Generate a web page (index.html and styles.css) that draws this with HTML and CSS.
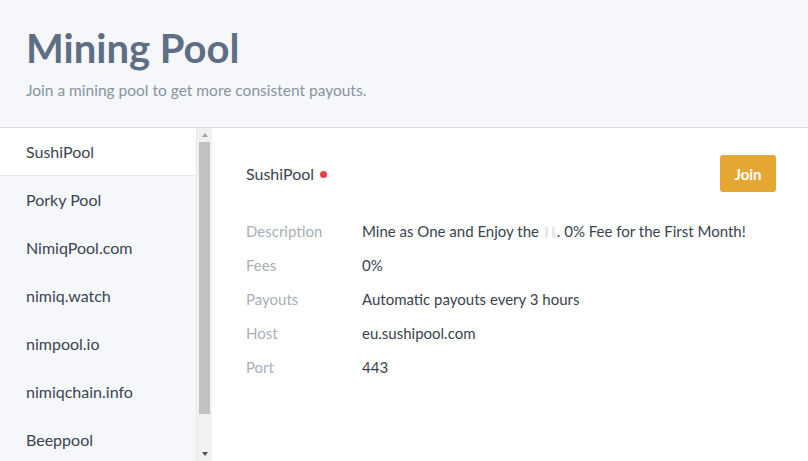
FILE: index.html
```
<!DOCTYPE html>
<html>
<head>
<meta charset="utf-8">
<link rel="stylesheet" href="styles.css">
</head>
<body>
<div class="header">
  <h1 class="title">Mining Pool</h1>
  <p class="subtitle">Join a mining pool to get more consistent payouts.</p>
</div>
<div class="layout">
  <div class="sidebar">
    <ul class="list">
      <li class="item selected">SushiPool</li>
      <li class="item">Porky Pool</li>
      <li class="item">NimiqPool.com</li>
      <li class="item">nimiq.watch</li>
      <li class="item">nimpool.io</li>
      <li class="item">nimiqchain.info</li>
      <li class="item">Beeppool</li>
    </ul>
    <div class="scrollbar">
      <div class="arrow up"></div>
      <div class="track"><div class="thumb"></div></div>
      <div class="arrow down"></div>
    </div>
  </div>
  <div class="main">
    <div class="pool-head">
      <div class="pool-name">SushiPool <span class="dot"></span></div>
      <button class="join">Join</button>
    </div>
    <div class="details">
      <div class="row"><div class="label">Description</div><div class="value">Mine as One and Enjoy the <span class="missing"></span><span class="missing"></span>. 0% Fee for the First Month!</div></div>
      <div class="row"><div class="label">Fees</div><div class="value">0%</div></div>
      <div class="row"><div class="label">Payouts</div><div class="value">Automatic payouts every 3 hours</div></div>
      <div class="row"><div class="label">Host</div><div class="value">eu.sushipool.com</div></div>
      <div class="row"><div class="label">Port</div><div class="value">443</div></div>
    </div>
  </div>
</div>
</body>
</html>
```
FILE: styles.css
```
* { box-sizing: border-box; }
html, body { margin: 0; padding: 0; }
body {
  font-family: Lato, "Open Sans", sans-serif;
  background: #ffffff;
  width: 808px;
  height: 461px;
  overflow: hidden;
}
.header {
  height: 128px;
  background: #f5f7fa;
  border-bottom: 1px solid #d6dbe0;
  padding: 25px 26px 0 26px;
}
.title {
  margin: 0;
  font-size: 40px;
  font-weight: 700;
  color: #5d6e85;
  line-height: 46px;
}
.subtitle {
  margin: 9px 0 0 0;
  font-size: 15.5px;
  color: #8894a1;
  line-height: 20px;
}
.layout {
  display: flex;
  height: 333px;
}
.sidebar {
  width: 212px;
  display: flex;
  background: #f5f7fa;
}
.list {
  list-style: none;
  margin: 0;
  padding: 0;
  flex: 1;
  border-right: 1px solid #e6e9ed;
}
.item {
  height: 48px;
  line-height: 48px;
  padding-left: 26px;
  font-size: 16px;
  color: #3b4550;
}
.selected {
  background: #ffffff;
  border-bottom: 1px solid #e6e9ed;
}
.scrollbar {
  width: 15px;
  background: #f1f1f1;
  display: flex;
  flex-direction: column;
}
.arrow {
  height: 14px;
  display: flex;
  justify-content: center;
  align-items: center;
}
.arrow::after {
  content: "";
  width: 0;
  height: 0;
  border-left: 3px solid transparent;
  border-right: 3px solid transparent;
}
.up::after { border-bottom: 4px solid #a3a3a3; }
.down::after { border-top: 4px solid #505050; }
.track {
  flex: 1;
  padding: 0 2px;
}
.thumb {
  height: 272px;
  background: #c1c1c1;
}
.main {
  flex: 1;
  padding: 27px 32px 0 34px;
}
.pool-head {
  display: flex;
  justify-content: space-between;
  align-items: center;
  height: 37px;
}
.pool-name {
  font-size: 16px;
  color: #3b4550;
  display: flex;
  align-items: center;
  gap: 6px;
}
.dot {
  width: 7px;
  height: 7px;
  border-radius: 50%;
  background: #e8413d;
  margin-top: 2px;
}
.join {
  width: 56px;
  height: 37px;
  border: none;
  border-radius: 3px;
  background: #e5a632;
  color: #ffffff;
  font-family: Lato, sans-serif;
  font-weight: 700;
  font-size: 15px;
  padding: 0;
}
.details {
  margin-top: 22px;
}
.row {
  display: flex;
  height: 34px;
  align-items: center;
  font-size: 15px;
}
.label {
  width: 116px;
  color: #a7afb8;
}
.value {
  color: #3a434d;
}
.missing {
  display: inline-block;
  width: 3px;
  height: 11px;
  background: #e6e8eb;
  margin: 0 2px;
  vertical-align: -1px;
}
```
